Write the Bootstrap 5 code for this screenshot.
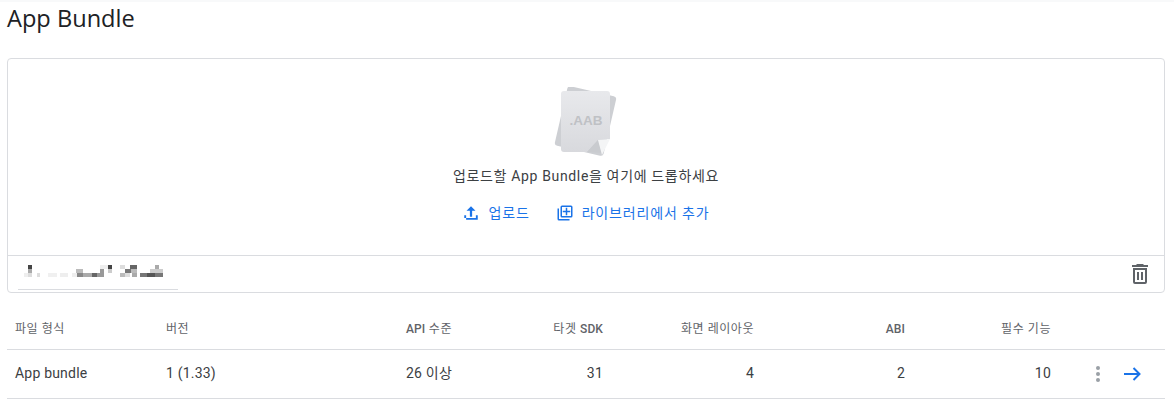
<!DOCTYPE html>
<html lang="ko">
<head>
  <meta charset="UTF-8">
  <meta name="viewport" content="width=device-width, initial-scale=1.0">
  <title>App Bundle</title>
  <link href="https://cdn.jsdelivr.net/npm/bootstrap@5.3.0/dist/css/bootstrap.min.css" rel="stylesheet">
  <style>
    body {
      font-family: Roboto, "Noto Sans CJK KR", sans-serif;
      background-color: #fff;
      color: #3c4043;
      font-size: 14px;
      overflow: hidden;
    }
    .page-wrap {
      border-top: 2px solid #f8f9fa;
      padding: 0 9px 0 7px;
    }
    .page-title {
      font-family: "Open Sans", "Noto Sans CJK KR", sans-serif;
      font-size: 23.6px;
      line-height: 32px;
      color: #202124;
      margin: 0 0 24px;
    }
    .drop-box {
      height: 235px;
      border: 1px solid #dadce0;
      border-radius: 4px;
    }
    .drop-area {
      height: 197px;
      padding-top: 28px;
      border-bottom: 1px solid #dadce0;
    }
    .drop-text {
      line-height: 20px;
      margin-top: 9px;
      letter-spacing: .65px;
    }
    .action-link {
      color: #1a73e8;
      text-decoration: none;
      line-height: 20px;
      letter-spacing: .85px;
    }
    .actions-row {
      margin-top: 17px;
      gap: 26px;
    }
    .file-row {
      height: 36px;
      padding: 0 12px 0 10px;
    }
    .file-name {
      width: 160px;
      height: 34px;
      padding-top: 9px;
      border-bottom: 1px solid #dadce0;
      display: block;
    }
    .trash-icon {
      margin-top: 6px;
    }
    .apk-table {
      table-layout: fixed;
      width: 1158px;
      margin-top: 16px;
      margin-bottom: 0;
      --bs-table-color: #3c4043;
      --bs-table-border-color: #dadce0;
    }
    .apk-table th {
      font-size: 12px;
      font-weight: 400;
      letter-spacing: .55px;
      color: #5f6368;
      height: 40px;
      padding: 0 8px;
      vertical-align: middle;
    }
    .apk-table th .fw-medium {
      letter-spacing: .1px;
    }
    .apk-table td {
      height: 49px;
      padding: 0 8px;
      vertical-align: middle;
      font-size: 14px;
      letter-spacing: .2px;
    }
    .row-actions {
      gap: 22px;
      padding-right: 16px;
    }
  </style>
</head>
<body>
  <div class="page-wrap">
    <h1 class="page-title">App Bundle</h1>

    <div class="drop-box">
      <div class="drop-area text-center">
        <svg width="64" height="70" viewBox="0 0 64 70" class="d-block mx-auto">
          <defs>
            <linearGradient id="sheet" x1="0" y1="0" x2="0" y2="1">
              <stop offset="0" stop-color="#e8e9ec"/>
              <stop offset="1" stop-color="#d8d9dd"/>
            </linearGradient>
          </defs>
          <rect x="6.500" y="3.500" width="50" height="61" rx="3" fill="#cdcfd3" transform="rotate(13 31.500 34)"/>
          <path d="M10 4H53a3 3 0 0 1 3 3V52L44 53 33 65H10a3 3 0 0 1-3-3V7a3 3 0 0 1 3-3Z" fill="url(#sheet)"/>
          <path d="M33 65 44 53 48 66Z" fill="#c9cbcf"/>
          <path d="M44 53 56 52 48 68Z" fill="#f4f5f6"/>
          <text x="32" y="38" text-anchor="middle" font-family="Liberation Sans, sans-serif" font-size="13.500" font-weight="700" fill="#bfc1c5">.AAB</text>
        </svg>
        <div class="drop-text">업로드할 App Bundle을 여기에 드롭하세요</div>
        <div class="actions-row d-flex justify-content-center">
          <a href="#" class="action-link d-flex align-items-center gap-2">
            <svg width="18" height="18" viewBox="0 0 24 24" fill="#1a73e8"><path d="M3 21h18v-2.500H3zM3 21v-6h2.500v6zM21 21v-6h-2.500v6zM10.500 17h3V9H18l-6-6-6 6h4.500z"/></svg>
            <span>업로드</span>
          </a>
          <a href="#" class="action-link d-flex align-items-center gap-2">
            <svg width="18" height="18" viewBox="0 0 24 24" fill="#1a73e8"><path d="M4 6H2v14a2 2 0 0 0 2 2h14v-2H4zm16-4H8a2 2 0 0 0-2 2v12a2 2 0 0 0 2 2h12a2 2 0 0 0 2-2V4a2 2 0 0 0-2-2zm0 14H8V4h12zm-7-1h2v-4h4V9h-4V5h-2v4H9v2h4z"/></svg>
            <span>라이브러리에서 추가</span>
          </a>
        </div>
      </div>
      <div class="file-row d-flex justify-content-between align-items-start">
        <span class="file-name">
          <svg width="150" height="12" viewBox="0 0 150 12" class="d-block" shape-rendering="crispEdges" aria-hidden="true">
            <!-- redacted file name, row 1 -->
            <rect x="10" y="0" width="4" height="4" fill="#444"/><rect x="82" y="0" width="8" height="4" fill="#eee"/><rect x="90" y="0" width="4" height="4" fill="#444"/>
            <rect x="102" y="0" width="5" height="4" fill="#ddd"/><rect x="112" y="0" width="7" height="4" fill="#666"/><rect x="137" y="0" width="4" height="4" fill="#aaa"/>
            <!-- row 2 -->
            <rect x="10" y="4" width="4" height="4" fill="#aaa"/><rect x="58" y="4" width="7" height="4" fill="#bbb"/><rect x="82" y="4" width="4" height="4" fill="#999"/>
            <rect x="90" y="4" width="4" height="4" fill="#ccc"/><rect x="107" y="4" width="6" height="4" fill="#777"/><rect x="113" y="4" width="6" height="4" fill="#bbb"/><rect x="132" y="4" width="13" height="4" fill="#ccc"/>
            <!-- row 3 -->
            <rect x="6" y="8" width="4" height="4" fill="#eee"/><rect x="10" y="8" width="4" height="4" fill="#ddd"/><rect x="19" y="8" width="3" height="4" fill="#ddd"/>
            <rect x="30" y="8" width="9" height="4" fill="#f0f0f0"/><rect x="42" y="8" width="8" height="4" fill="#eee"/><rect x="54" y="8" width="5" height="4" fill="#eee"/>
            <rect x="59" y="8" width="6" height="4" fill="#888"/><rect x="65" y="8" width="9" height="4" fill="#aaa"/><rect x="74" y="8" width="5" height="4" fill="#666"/><rect x="79" y="8" width="7" height="4" fill="#999"/>
            <rect x="102" y="8" width="5" height="4" fill="#bbb"/><rect x="107" y="8" width="5" height="4" fill="#ddd"/><rect x="114" y="8" width="5" height="4" fill="#aaa"/>
            <rect x="122" y="8" width="7" height="4" fill="#777"/><rect x="129" y="8" width="8" height="4" fill="#555"/><rect x="137" y="8" width="8" height="4" fill="#777"/>
          </svg>
        </span>
        <svg width="24" height="24" viewBox="0 0 24 24" fill="#5f6368" class="trash-icon"><path d="M15 2H9L8 3H4v2h16V3h-4zM5 6v14a2 2 0 0 0 2 2h10a2 2 0 0 0 2-2V6zm12 14H7V8h10zM9 10h2v8H9zm4 0h2v8h-2z"/></svg>
      </div>
    </div>

    <table class="table apk-table">
      <colgroup>
        <col style="width:151px"><col style="width:151px"><col style="width:151px"><col style="width:151px"><col style="width:151px"><col style="width:151px"><col style="width:146px"><col>
      </colgroup>
      <thead>
        <tr>
          <th>파일 형식</th>
          <th>버전</th>
          <th class="text-end"><span class="fw-medium">API</span> 수준</th>
          <th class="text-end">타겟 <span class="fw-medium">SDK</span></th>
          <th class="text-end">화면 레이아웃</th>
          <th class="text-end"><span class="fw-medium">ABI</span></th>
          <th class="text-end">필수 기능</th>
          <th></th>
        </tr>
      </thead>
      <tbody>
        <tr>
          <td>App bundle</td>
          <td>1 (1.33)</td>
          <td class="text-end">26 이상</td>
          <td class="text-end">31</td>
          <td class="text-end">4</td>
          <td class="text-end">2</td>
          <td class="text-end">10</td>
          <td>
            <div class="row-actions d-flex align-items-center justify-content-end">
              <svg width="6" height="18" viewBox="0 0 6 18" fill="#9aa0a6"><circle cx="3" cy="3" r="2"/><circle cx="3" cy="9" r="2"/><circle cx="3" cy="15" r="2"/></svg>
              <svg width="18" height="14" viewBox="0 0 18 14" fill="none" stroke="#1a73e8" stroke-width="2"><path d="M1 7h15M10.500 1l6 6-6 6"/></svg>
            </div>
          </td>
        </tr>
      </tbody>
    </table>
  </div>
  <script src="https://cdn.jsdelivr.net/npm/bootstrap@5.3.0/dist/js/bootstrap.bundle.min.js"></script>
</body>
</html>
